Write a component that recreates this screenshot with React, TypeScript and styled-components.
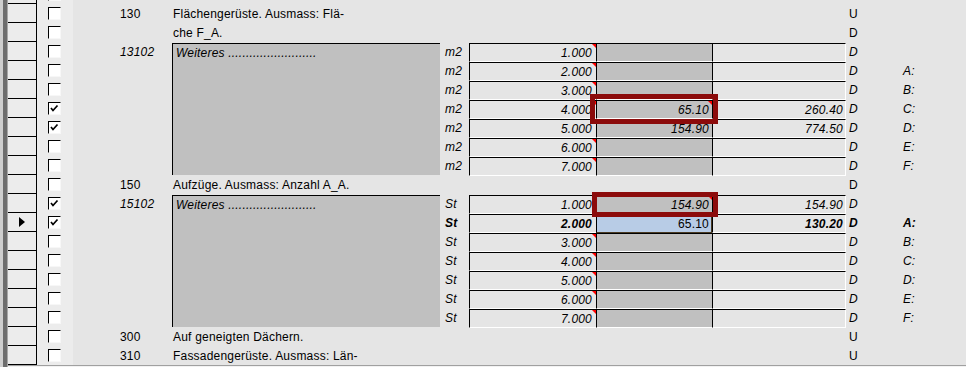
import React from "react";
import styled, { createGlobalStyle, css } from "styled-components";

const GlobalStyle = createGlobalStyle`
    html, body {
        margin: 0;
        padding: 0;
        background: #e5e5e5;
    }
    body {
        font-family: "Liberation Sans", Arial, sans-serif;
        font-size: 12px;
        letter-spacing: 0.2px;
        color: #000;
    }
`

const Frame = styled.div`
    display: flex;
    width: 966px;
    height: 367px;
    overflow: hidden;
    background: #e5e5e5;
`

const Gutter = styled.div`
    width: 8px;
    flex: none;
    box-sizing: border-box;
    border-left: 3px solid #cfcfcf;
    border-right: 1px solid #a8a8a8;
    background: #6e6e6e;
`

const Viewport = styled.div`
    flex: 1;
    display: flex;
    flex-direction: column;
    overflow: hidden;
`

const Sheet = styled.div`
    display: grid;
    grid-template-columns: 29px 36px 98px 270px 28px 127px 116px 134px 54px 1fr;
    grid-template-rows: repeat(20, 19px);
    margin-top: -15px;
`

const ScrollStrip = styled.div`
    height: 2px;
    flex: none;
    border-top: 1px solid #a0a0a0;
    background: #f2f2f2;
`

interface RowProps {
    $row: number;
}

const Selector = styled.div<RowProps>`
    grid-column: 1;
    grid-row: ${({ $row }) => $row};
    box-sizing: border-box;
    border-right: 1px solid #000;
    border-bottom: 1px solid #000;
    background: #ececec;
    display: flex;
    align-items: center;
    padding-left: 11px;
`

const CheckCell = styled.div<RowProps>`
    grid-column: 2;
    grid-row: ${({ $row }) => $row};
    background: #ececec;
    display: flex;
    align-items: center;
    padding-left: 11px;
`

const Box = styled.span`
    width: 13px;
    height: 13px;
    box-sizing: border-box;
    border-top: 1px solid #000;
    border-left: 1px solid #000;
    border-right: 1px solid #f7f7f7;
    border-bottom: 1px solid #f7f7f7;
    background: #fff;
    display: flex;
    svg {
        width: 11px;
        height: 11px;
    }
`

const textCell = css`
    display: flex;
    align-items: center;
    white-space: nowrap;
`

const NrCell = styled.div<RowProps & { $italic?: boolean }>`
    ${textCell};
    grid-column: 3;
    grid-row: ${({ $row }) => $row};
    padding-left: 47px;
    font-style: ${({ $italic }) => $italic ? "italic" : "normal"};
`

const TextCell = styled.div<RowProps>`
    ${textCell};
    grid-column: 4;
    grid-row: ${({ $row }) => $row};
    padding-left: 2px;
`

const Memo = styled.div<RowProps>`
    grid-column: 4;
    grid-row: ${({ $row }) => $row} / span 7;
    margin: 1px 1px 0 1px;
    border-top: 1px solid #000;
    border-left: 1px solid #000;
    background: #c0c0c0;
    font-style: italic;
    padding: 2px 3px;
    white-space: nowrap;
`

const UnitCell = styled.div<RowProps & { $bold?: boolean }>`
    ${textCell};
    grid-column: 5;
    grid-row: ${({ $row }) => $row};
    padding-left: 4px;
    font-style: italic;
    font-weight: ${({ $bold }) => $bold ? "bold" : "normal"};
`

const editCell = css`
    position: relative;
    ${textCell};
    justify-content: flex-end;
    box-sizing: border-box;
    margin: 1px 0 -1px 0;
    border-top: 1px solid #000;
    border-left: 1px solid #000;
    border-bottom: 1px solid #fff;
    font-style: italic;
`

const QtyCell = styled.div<RowProps & { $bold?: boolean }>`
    ${editCell};
    grid-column: 6;
    grid-row: ${({ $row }) => $row};
    padding-right: 4px;
    font-weight: ${({ $bold }) => $bold ? "bold" : "normal"};
`

const PriceCell = styled.div<RowProps & { $edit?: boolean }>`
    ${editCell};
    grid-column: 7;
    grid-row: ${({ $row }) => $row};
    padding-right: 3px;
    background: #c0c0c0;
    ${({ $edit }) => $edit && css`
        background: #b8cce6;
        font-style: normal;
        border-right: 1px solid #4a3a22;
        border-bottom: 1px solid #4a3a22;
        padding-right: 2px;
    `}
`

const TotalCell = styled.div<RowProps & { $bold?: boolean }>`
    ${editCell};
    grid-column: 8;
    grid-row: ${({ $row }) => $row};
    padding-right: 2px;
    border-right: 1px solid #fff;
    font-weight: ${({ $bold }) => $bold ? "bold" : "normal"};
`

const FlagCell = styled.div<RowProps & { $italic?: boolean; $bold?: boolean }>`
    ${textCell};
    grid-column: 9;
    grid-row: ${({ $row }) => $row};
    padding-left: 3px;
    font-style: ${({ $italic }) => $italic ? "italic" : "normal"};
    font-weight: ${({ $bold }) => $bold ? "bold" : "normal"};
`

const LabelCell = styled.div<RowProps & { $bold?: boolean }>`
    ${textCell};
    grid-column: 10;
    grid-row: ${({ $row }) => $row};
    padding-left: 3px;
    font-style: italic;
    font-weight: ${({ $bold }) => $bold ? "bold" : "normal"};
`

const Comment = styled.span`
    position: absolute;
    top: 0;
    right: 0;
    width: 0;
    height: 0;
    border-top: 4px solid #ff0000;
    border-left: 4px solid transparent;
`

const Mark = styled.span<{ $top: number; $bottom: number; $left: number }>`
    position: absolute;
    z-index: 2;
    top: ${({ $top }) => $top}px;
    bottom: ${({ $bottom }) => $bottom}px;
    left: ${({ $left }) => $left}px;
    right: -6px;
    border: 5px solid #8c0b0b;
    pointer-events: none;
`

function Check({ checked }: { checked?: boolean }): JSX.Element {
    return (
        <Box>
            {checked ?
                <svg viewBox="0 0 11 11">
                    <path d="M2 5 L4 7.5 L8.5 2.5" fill="none" stroke="#000" strokeWidth="1.7" />
                </svg>
                : null}
        </Box>
    )
}

interface Line {
    unit: string;
    qty: string;
    price?: string;
    total?: string;
    comment?: boolean;
    priceComment?: boolean;
    bold?: boolean;
    edit?: boolean;
    mark?: "wide" | "narrow";
    label?: string;
}

interface Block {
    row: number;
    nr: string;
    lines: Line[];
}

interface Heading {
    row: number;
    nr?: string;
    text: string;
    flag: string;
}

const headings: Heading[] = [
    { row: 0, nr: "130", text: "Flächengerüste. Ausmass: Flä-", flag: "U" },
    { row: 1, text: "che F_A.", flag: "D" },
    { row: 9, nr: "150", text: "Aufzüge. Ausmass: Anzahl A_A.", flag: "D" },
    { row: 17, nr: "300", text: "Auf geneigten Dächern.", flag: "U" },
    { row: 18, nr: "310", text: "Fassadengerüste. Ausmass: Län-", flag: "U" },
]

const blocks: Block[] = [
    {
        row: 2, nr: "13102", lines: [
            { unit: "m2", qty: "1.000", comment: true },
            { unit: "m2", qty: "2.000", comment: true, label: "A:" },
            { unit: "m2", qty: "3.000", comment: true, label: "B:" },
            { unit: "m2", qty: "4.000", comment: true, price: "65.10", total: "260.40", priceComment: true, mark: "wide", label: "C:" },
            { unit: "m2", qty: "5.000", comment: true, price: "154.90", total: "774.50", label: "D:" },
            { unit: "m2", qty: "6.000", comment: true, label: "E:" },
            { unit: "m2", qty: "7.000", comment: true, label: "F:" },
        ]
    },
    {
        row: 10, nr: "15102", lines: [
            { unit: "St", qty: "1.000", price: "154.90", total: "154.90", priceComment: true, mark: "narrow" },
            { unit: "St", qty: "2.000", price: "65.10", total: "130.20", bold: true, edit: true, label: "A:" },
            { unit: "St", qty: "3.000", comment: true, label: "B:" },
            { unit: "St", qty: "4.000", comment: true, label: "C:" },
            { unit: "St", qty: "5.000", comment: true, label: "D:" },
            { unit: "St", qty: "6.000", comment: true, label: "E:" },
            { unit: "St", qty: "7.000", comment: true, label: "F:" },
        ]
    },
]

const checkedRows = [5, 6, 10, 11];
const currentRow = 11;
const rowCount = 19;

export default function App(): JSX.Element {
    // grid row 1 is the half-scrolled row above the first visible one
    const g = (row: number): number => row + 2;
    return (
        <>
            <GlobalStyle />
            <Frame>
                <Gutter />
                <Viewport>
                    <Sheet>
                        <Selector $row={1} />
                        <CheckCell $row={1}><Check /></CheckCell>
                        {Array.from({ length: rowCount }, (_, row) => (
                            <React.Fragment key={row}>
                                <Selector $row={g(row)}>
                                    {row === currentRow ?
                                        <svg width="6" height="10" viewBox="0 0 6 10">
                                            <path d="M0 0 L6 5 L0 10 Z" fill="#000" />
                                        </svg>
                                        : null}
                                </Selector>
                                <CheckCell $row={g(row)}>
                                    <Check checked={checkedRows.includes(row)} />
                                </CheckCell>
                            </React.Fragment>
                        ))}
                        {headings.map((h) => (
                            <React.Fragment key={h.row}>
                                {h.nr ? <NrCell $row={g(h.row)}>{h.nr}</NrCell> : null}
                                <TextCell $row={g(h.row)}>{h.text}</TextCell>
                                <FlagCell $row={g(h.row)}>{h.flag}</FlagCell>
                            </React.Fragment>
                        ))}
                        {blocks.map((b) => (
                            <React.Fragment key={b.row}>
                                <NrCell $row={g(b.row)} $italic>{b.nr}</NrCell>
                                <Memo $row={g(b.row)}>Weiteres .........................</Memo>
                                {b.lines.map((l, i) => {
                                    const r = g(b.row + i);
                                    return (
                                        <React.Fragment key={i}>
                                            <UnitCell $row={r} $bold={l.bold}>{l.unit}</UnitCell>
                                            <QtyCell $row={r} $bold={l.bold}>
                                                {l.qty}
                                                {l.comment ? <Comment /> : null}
                                            </QtyCell>
                                            <PriceCell $row={r} $edit={l.edit}>
                                                {l.price}
                                                {l.priceComment ? <Comment /> : null}
                                                {l.mark === "wide" ? <Mark $top={-7} $bottom={-6} $left={-7} /> : null}
                                                {l.mark === "narrow" ? <Mark $top={-4} $bottom={-4} $left={-5} /> : null}
                                            </PriceCell>
                                            <TotalCell $row={r} $bold={l.bold}>{l.total}</TotalCell>
                                            <FlagCell $row={r} $italic $bold={l.bold}>D</FlagCell>
                                            {l.label ? <LabelCell $row={r} $bold={l.bold}>{l.label}</LabelCell> : null}
                                        </React.Fragment>
                                    )
                                })}
                            </React.Fragment>
                        ))}
                    </Sheet>
                    <ScrollStrip />
                </Viewport>
            </Frame>
        </>
    )
}
